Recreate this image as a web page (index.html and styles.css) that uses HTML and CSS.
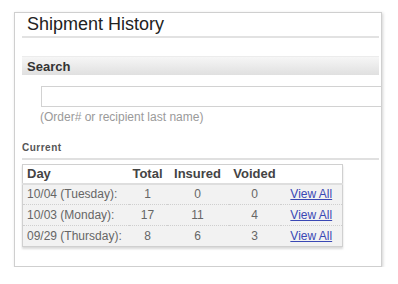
FILE: index.html
```html
<!DOCTYPE html>
<html lang="en">
<head>
	<meta charset="UTF-8" />
	<title>Shipment History</title>
	<link rel="stylesheet" href="styles.css">
</head>
<body>
	<div class="card">
		<!-- 标题 -->
		<h1 class="title">Shipment History</h1>
		<!-- 搜索 -->
		<div class="bar">Search</div>
		<div class="search">
			<input type="text" class="search-input" />
			<div class="hint">(Order# or recipient last name)</div>
		</div>
		<!-- 当前 -->
		<div class="section">Current</div>
		<table class="history">
			<thead>
				<tr>
					<th class="day">Day</th>
					<th class="total">Total</th>
					<th class="insured">Insured</th>
					<th class="voided">Voided</th>
					<th class="link"></th>
				</tr>
			</thead>
			<tbody>
				<tr>
					<td class="day">10/04 (Tuesday):</td>
					<td>1</td>
					<td>0</td>
					<td>0</td>
					<td class="link"><a href="#">View All</a></td>
				</tr>
				<tr>
					<td class="day">10/03 (Monday):</td>
					<td>17</td>
					<td>11</td>
					<td>4</td>
					<td class="link"><a href="#">View All</a></td>
				</tr>
				<tr>
					<td class="day">09/29 (Thursday):</td>
					<td>8</td>
					<td>6</td>
					<td>3</td>
					<td class="link"><a href="#">View All</a></td>
				</tr>
			</tbody>
		</table>
	</div>
</body>
</html>
```

FILE: styles.css
```css
html,
body {
	margin: 0;
	padding: 0;
	background-color: #fff;
	font-family: "Liberation Sans", Arial, sans-serif;
}

* {
	box-sizing: border-box;
}

.card {
	width: 368px;
	height: 255px;
	margin: 12px 0 0 14px;
	padding: 0 2px 0 7px;
	border: 1px solid #cfcfcf;
	box-shadow: 1px 1px 3px rgba(0, 0, 0, .18);
	overflow: hidden;
}

.title {
	margin: 0;
	height: 25px;
	padding: 1px 0 0 5px;
	font-size: 18px;
	font-weight: normal;
	line-height: 20px;
	color: #222;
	border-bottom: 2px solid #e2e2e2;
}

.bar {
	margin-top: 18px;
	height: 19px;
	padding-left: 5px;
	font-size: 13px;
	font-weight: bold;
	line-height: 19px;
	color: #333;
	background: linear-gradient(#f6f6f6, #e0e0e0);
	border-top: 1px solid #ececec;
}

.search {
	padding: 11px 0 0 19px;
	margin-right: -4px;
}

.search-input {
	display: block;
	width: 100%;
	height: 21px;
	margin: 0;
	border: 1px solid #d2d2d2;
	background-color: #fff;
}

.hint {
	margin-top: 3px;
	margin-left: -1px;
	font-size: 12px;
	line-height: 14px;
	color: #9a9a9a;
}

.section {
	margin-top: 18px;
	padding-bottom: 4px;
	font-size: 10px;
	font-weight: bold;
	letter-spacing: .5px;
	line-height: 12px;
	color: #555;
	border-bottom: 2px solid #e0e0e0;
}

.history {
	margin-top: 4px;
	width: 321px;
	border-collapse: collapse;
	border: 1px solid #d0d0d0;
	box-shadow: 0 2px 2px rgba(0, 0, 0, .15);
	font-size: 12px;
	color: #666;
}

.history th {
	height: 19px;
	padding: 0;
	font-size: 13px;
	color: #444;
	text-align: center;
	background-color: #fff;
	border-bottom: 2px solid #dedede;
}

.history td {
	height: 21px;
	padding: 0;
	text-align: center;
	background-color: #f2f2f2;
	border-top: 1px dotted #cfcfcf;
}

.history .day {
	width: 106px;
	padding-left: 4px;
	text-align: left;
}

.history .total {
	width: 38px;
}

.history .insured {
	width: 62px;
}

.history .voided {
	width: 52px;
}

.history .link a {
	color: #3a48b4;
	text-decoration: underline;
}
```
